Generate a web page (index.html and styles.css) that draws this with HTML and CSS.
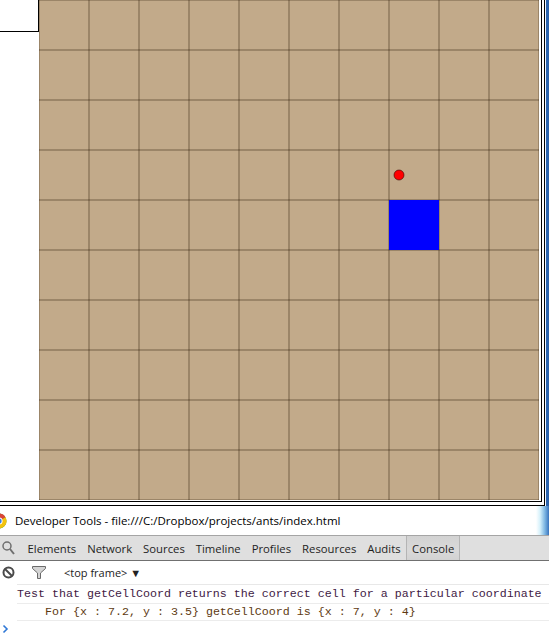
FILE: index.html
```html
<!DOCTYPE html>
<html>
<head>
<meta charset="utf-8">
<link rel="stylesheet" href="styles.css">
</head>
<body>
<div class="top">
  <div class="outer">
    <div class="inner">
      <div class="page">
        <div class="side"><div class="box"></div></div>
        <svg class="board" width="500" height="500" viewBox="0 0 500 500">
          <rect x="0" y="0" width="500" height="500" fill="#c2aa8a"/>
          <g stroke="rgba(40,25,5,0.25)" stroke-width="2" shape-rendering="crispEdges">
            <path d="M0 0V500M50 0V500M100 0V500M150 0V500M200 0V500M250 0V500M300 0V500M350 0V500M400 0V500M450 0V500M500 0V500"/>
            <path d="M0 0H500M0 50H500M0 100H500M0 150H500M0 200H500M0 250H500M0 300H500M0 350H500M0 400H500M0 450H500M0 500H500"/>
          </g>
          <rect x="350" y="200" width="50" height="50" fill="#0000ff"/>
          <circle cx="360" cy="175" r="5" fill="#ff0000" stroke="rgba(60,0,0,0.6)" stroke-width="1"/>
        </svg>
      </div>
    </div>
  </div>
  <div class="edge"></div>
</div>
<div class="titlebar">
  <svg class="chrome" width="16" height="16" viewBox="0 0 16 16">
    <circle cx="8" cy="8" r="7.5" fill="#3a9d3e"/>
    <path d="M8 8 L1.5 4.25 A7.5 7.5 0 0 1 14.5 4.25 Z" fill="#db4437"/>
    <path d="M8 8 L14.5 4.25 A7.5 7.5 0 0 1 8 15.5 Z" fill="#f4c20d"/>
    <circle cx="8" cy="8" r="3.6" fill="#fff"/>
    <circle cx="8" cy="8" r="2.7" fill="#3b7de0"/>
  </svg>
  <span class="title">Developer Tools - file:///C:/Dropbox/projects/ants/index.html</span>
</div>
<div class="toolbar">
  <div class="search">
    <svg width="13" height="14" viewBox="0 0 13 14">
      <circle cx="5" cy="5" r="4" fill="none" stroke="#6f6f6f" stroke-width="1.5"/>
      <path d="M8 8 L12 13" stroke="#6f6f6f" stroke-width="2"/>
    </svg>
  </div>
  <div class="tabs">
    <span class="tab">Elements</span>
    <span class="tab">Network</span>
    <span class="tab">Sources</span>
    <span class="tab">Timeline</span>
    <span class="tab">Profiles</span>
    <span class="tab">Resources</span>
    <span class="tab">Audits</span>
    <span class="tab active">Console</span>
  </div>
</div>
<div class="console-bar">
  <svg class="clear" width="13" height="13" viewBox="0 0 13 13">
    <circle cx="6.5" cy="6.5" r="5" fill="none" stroke="#4a4a4a" stroke-width="2"/>
    <path d="M3 3 L10 10" stroke="#4a4a4a" stroke-width="2"/>
  </svg>
  <svg class="filter" width="14" height="13" viewBox="0 0 14 13">
    <path d="M0.5 0.5 H13.5 V2.5 L8.5 7 V12.5 H5.5 V7 L0.5 2.5 Z" fill="#d4d4d4" stroke="#6a6a6a" stroke-width="1"/>
  </svg>
  <span class="frame-select">&lt;top frame&gt; ▼</span>
</div>
<div class="messages">
  <div class="msg msg-log">Test that getCellCoord returns the correct cell for a particular coordinate</div>
  <div class="msg msg-sub">For {x : 7.2, y : 3.5} getCellCoord is {x : 7, y : 4}</div>
</div>
<div class="prompt">
  <svg width="10" height="10" viewBox="0 0 10 10">
    <path d="M1.5 1.5 L5 5 L1.5 8.5" fill="none" stroke="#2f78d6" stroke-width="1.6"/>
  </svg>
</div>
</body>
</html>
```
FILE: styles.css
```css
body {
  margin: 0;
  width: 549px;
  height: 643px;
  overflow: hidden;
  background: #fff;
  font-family: "Open Sans", "Noto Sans", sans-serif;
}

.top {
  display: flex;
  height: 506px;
}

.outer {
  border-right: 1px solid #000;
  border-bottom: 1px solid #000;
  padding: 0 2px 1px 0;
  background: #fff;
}

.inner {
  border-right: 1px solid #000;
  border-bottom: 1px solid #000;
  padding: 0 2px 1px 0;
  background: #fff;
}

.page {
  display: flex;
  width: 539px;
  height: 500px;
}

.side {
  width: 39px;
  flex: none;
}

.box {
  width: 38px;
  height: 31px;
  border-right: 1px solid #000;
  border-bottom: 1px solid #000;
}

.board {
  display: block;
  flex: none;
}

.edge {
  flex: 1;
  background: linear-gradient(to right, #f4f8fc 0, #f4f8fc 1px, #2c64ad 1px, #2c64ad 100%);
}

.titlebar {
  height: 29px;
  display: flex;
  align-items: center;
  background: linear-gradient(to right, #fff 0, #fff 536px, #d6f1fb 540px, #7ab4e2 545px, #3a74bd 549px);
}

.chrome {
  flex: none;
  margin-left: -9px;
}

.title {
  margin-left: 8px;
  font-size: 11.5px;
  color: #000;
  white-space: nowrap;
}

.toolbar {
  height: 24px;
  display: flex;
  border-top: 1px solid #a5a5a5;
  border-bottom: 1px solid #707070;
  background: #dfdfdf;
}

.search {
  width: 22px;
  flex: none;
  display: flex;
  align-items: center;
  padding-left: 2px;
  box-sizing: border-box;
}

.tabs {
  display: flex;
}

.tab {
  display: flex;
  align-items: center;
  padding: 0 5.5px;
  font-size: 11.3px;
  color: #1e1e1e;
  white-space: nowrap;
}

.tab.active {
  padding: 0 5px;
  border-left: 1px solid #b4b4b4;
  border-right: 1px solid #b4b4b4;
  background: linear-gradient(#d2d2d2, #d9d9d9 60%, #d2d2d2);
}

.console-bar {
  height: 23px;
  display: flex;
  align-items: center;
}

.clear {
  margin-left: 2px;
  flex: none;
}

.filter {
  margin-left: 17px;
  flex: none;
}

.frame-select {
  margin-left: 18px;
  font-size: 11px;
  color: #222;
}

.messages {
  margin-left: 17px;
  border-top: 1px solid #e8e8e8;
}

.msg {
  border-bottom: 1px solid #ececec;
  font-family: "Liberation Mono", "DejaVu Sans Mono", monospace;
  font-size: 11.67px;
  white-space: pre;
}

.msg-log {
  height: 18px;
  line-height: 19px;
  color: #3f1a44;
}

.msg-sub {
  height: 16px;
  line-height: 16px;
  padding-left: 28px;
  color: #5e3a12;
}

.prompt {
  height: 16px;
  display: flex;
  align-items: center;
  padding-left: 2px;
}
```
